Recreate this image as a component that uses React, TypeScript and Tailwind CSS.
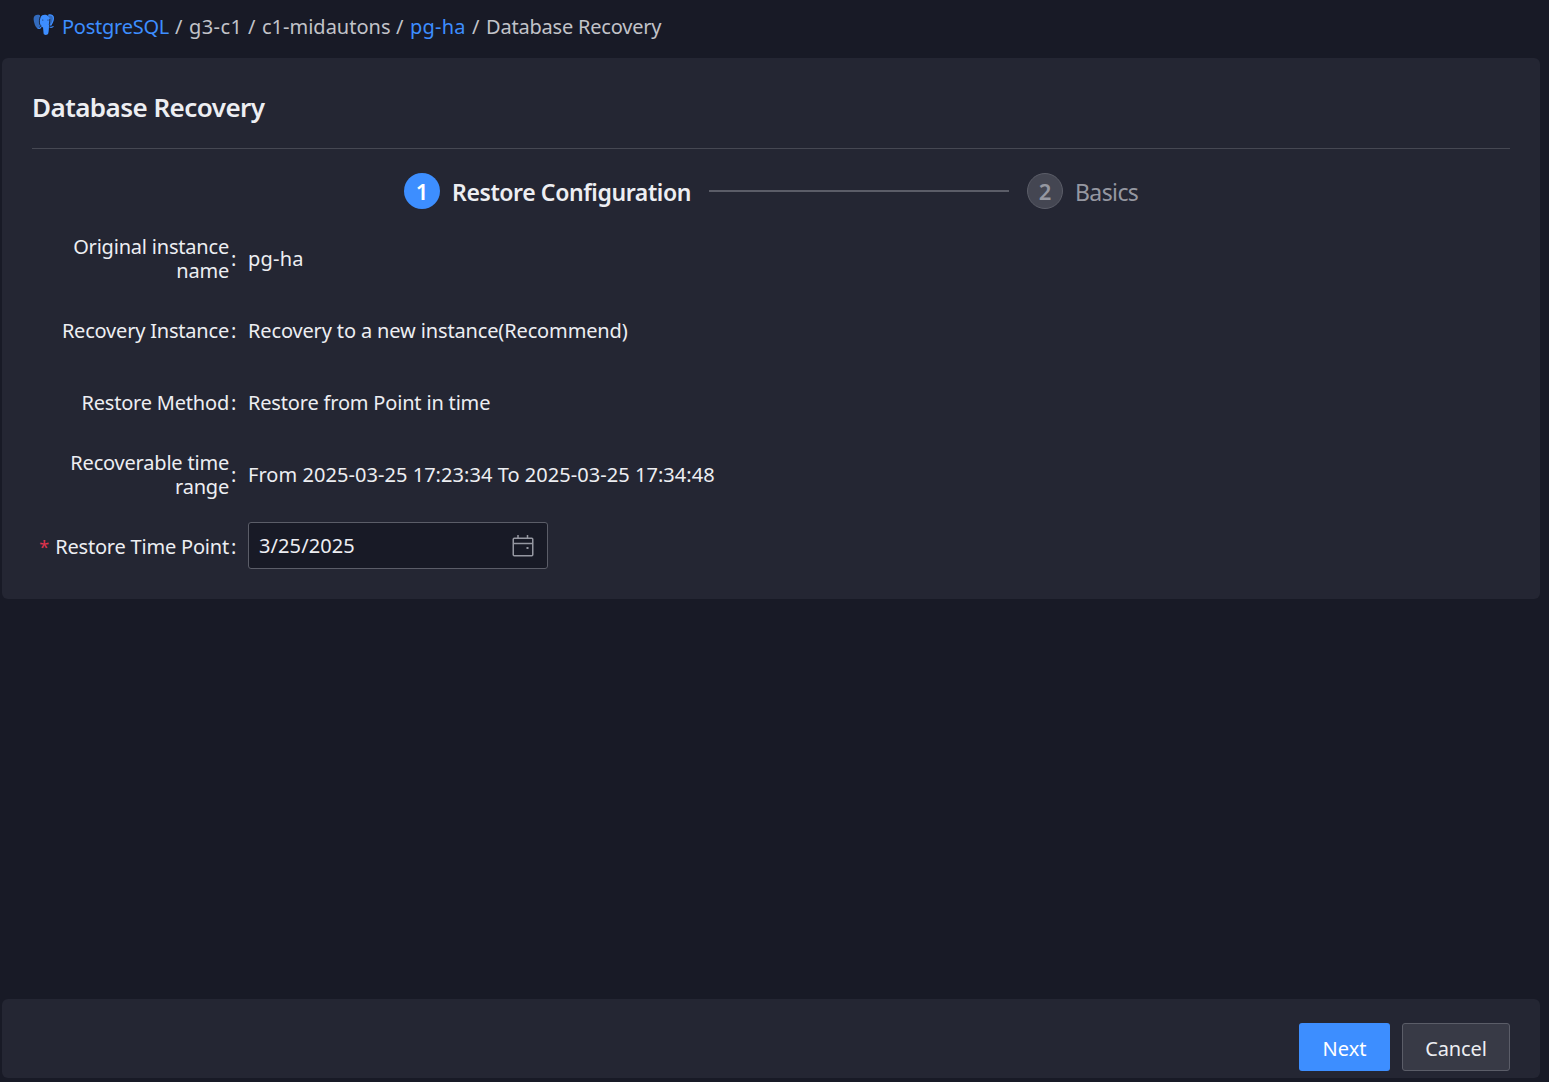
import React from 'react';

function PostgresIcon() {
  return (
    <svg viewBox="0 0 22 22" className="mt-[1px] h-[22px] w-[22px] shrink-0">
      <path d="M7 1.200C4 0 .4 1.200.6 5c.2 3.400 1.800 8 3.600 9.200.9.600 1.600-.4 2.500-1.500L8.200 11 6.800 9.500 7.200 4z" fill="#336bbd" />
      <path d="M15 1c3-1 6 .7 5.800 3.700-.2 2.600-1.500 5.300-3 7.300l-1.500.3-.6-2.200.4-4.300z" fill="#336bbd" />
      <path d="M7.500 3.200C8.500 1 11 .3 13.500 1c2 .6 3.200 2.500 3.300 4.800.1 2.200-.8 3.500-.8 5.500 0 2.700-.2 5.700-.7 8-.4 2-4.300 2.300-4.700.2-.4-2-.2-4.200-.6-6.300C8.800 13.500 7 12.600 7 10.500c0-2.500-.3-5 .5-7.300z" fill="#3d8eff" />
      <path d="M15.500 1.100c2.900-.7 5.200.8 4.900 3.700-.2 2.300-1.500 4.700-2.800 6.500M16.500 13c1.300.5 3 .2 4-.6M4.600 13.900c1 .8 2.500.5 3.500-.7" fill="none" stroke="#3d8eff" strokeWidth="1.200" />
      <path d="M7 3c-.8 2.300-.8 5.300-.2 7.700l1.700 1.300M16.800 5c.3 2.300-.5 3.700-.5 5.600l.8 1.600" fill="none" stroke="#181a26" strokeWidth=".8" />
      <circle cx="9.800" cy="6" r=".5" fill="#181a26" />
      <circle cx="15" cy="6" r=".5" fill="#181a26" />
    </svg>
  );
}

function CalendarIcon() {
  return (
    <svg viewBox="0 0 22 22" className="h-[22px] w-[22px]" fill="none" stroke="#9597a1" strokeWidth="1.500">
      <rect x="1.250" y="3.250" width="19.500" height="17.500" rx="1" />
      <path d="M1 8.500h20M6 0v4M15.500 0v4" />
      <path d="M14.500 13h2" strokeWidth="2" />
    </svg>
  );
}

type RowProps = {
  label: React.ReactNode;
  required?: boolean;
  children: React.ReactNode;
};

function Row({ label, required, children }: RowProps) {
  return (
    <div className="flex h-12 items-center">
      <div className="flex w-[206px] items-center justify-end">
        {required && <span className="mr-[6px] text-[18px] text-[#e0334d]">*</span>}
        <span className="text-right leading-6 tracking-[-0.2px] whitespace-nowrap">{label}</span>
        <span className="ml-[2px] w-[7px]">:</span>
      </div>
      <div className="ml-[10px] whitespace-nowrap">{children}</div>
    </div>
  );
}

export default function App() {
  return (
    <div className="flex h-[1082px] w-[1549px] flex-col overflow-hidden bg-[#181a26] pr-[9px] pl-[2px] font-['Noto_Sans',sans-serif] text-[20px] text-[#edeef2]">
      <nav className="flex h-[58px] items-start pt-[13px] pl-[31px] leading-[28px] whitespace-nowrap text-[#c2c3c9]">
        <PostgresIcon />
        <span className="ml-[7px] w-[113px] tracking-[-0.25px] text-[#3d8eff]">PostgreSQL</span>
        <span className="w-[14px]">/</span>
        <span className="w-[59px] tracking-[0.4px]">g3-c1</span>
        <span className="w-[14px]">/</span>
        <span className="w-[134px]">c1-midautons</span>
        <span className="w-[14px]">/</span>
        <span className="w-[62px] tracking-[0.2px] text-[#3d8eff]">pg-ha</span>
        <span className="w-[14px]">/</span>
        <span className="tracking-[-0.2px]">Database Recovery</span>
      </nav>
      <main className="h-[541px] rounded-md bg-[#242633] px-[30px]">
        <h1 className="h-[91px] border-b border-[#464853] pt-[30px] text-[26px] leading-[38px] font-semibold tracking-[-0.54px]">
          Database Recovery
        </h1>
        <div className="mt-6 ml-[372px] flex h-9 w-[740px] items-center whitespace-nowrap">
          <div className="flex size-9 items-center justify-center rounded-full bg-[#3d8eff] pt-px text-[22px] font-semibold text-white">1</div>
          <div className="ml-3 w-[257px] pt-[2px] text-[23px] font-semibold tracking-[-0.4px]">Restore Configuration</div>
          <div className="h-[2px] w-[300px] bg-[#5b5d68]" />
          <div className="ml-[18px] flex size-9 items-center justify-center rounded-full border border-[#5b5d68] bg-[#444652] pt-px text-[22px] font-semibold text-[#9597a1]">2</div>
          <div className="ml-3 pt-[2px] text-[23px] tracking-[-0.6px] text-[#9597a1]">Basics</div>
        </div>
        <div className="mt-[26px] flex flex-col gap-6">
          <Row label={<>Original instance<br />name</>}><span className="tracking-[0.2px]">pg-ha</span></Row>
          <Row label="Recovery Instance"><span className="tracking-[-0.14px]">Recovery to a new instance(Recommend)</span></Row>
          <Row label="Restore Method"><span className="tracking-[-0.18px]">Restore from Point in time</span></Row>
          <Row label={<>Recoverable time<br />range</>}><span className="tracking-[0.05px]">From 2025-03-25 17:23:34 To 2025-03-25 17:34:48</span></Row>
          <Row label="Restore Time Point" required>
            <div className="mb-[3px] flex h-[47px] w-[300px] items-center justify-between rounded-[3px] border border-[#5b5d68] bg-[#181a26] pr-[13px] pl-[10px]">
              <span className="pt-px tracking-[0.1px]">3/25/2025</span>
              <CalendarIcon />
            </div>
          </Row>
        </div>
      </main>
      <footer className="mt-[400px] flex h-[79px] shrink-0 justify-end gap-3 rounded-md bg-[#242633] pt-6 pr-[30px]">
        <button className="h-12 w-[91px] rounded-[3px] bg-[#3d8eff] pt-[3px] text-white">Next</button>
        <button className="h-12 w-[108px] rounded-[3px] border border-[#5b5d68] bg-[#383a46] pt-[3px] tracking-[-0.1px]">Cancel</button>
      </footer>
    </div>
  );
}
